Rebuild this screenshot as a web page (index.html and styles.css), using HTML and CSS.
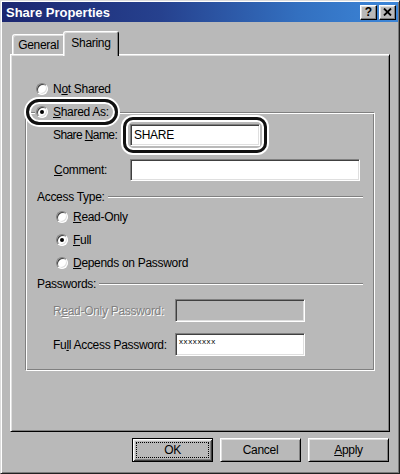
FILE: index.html
```html
<!DOCTYPE html>
<html>
<head>
<meta charset="utf-8">
<link rel="stylesheet" href="styles.css">
</head>
<body>
<div class="window">
  <div class="titlebar">
    <span class="title">Share Properties</span>
    <div class="tb-buttons">
      <span class="tb-btn help">?</span>
      <span class="tb-btn close"><svg width="9" height="8" viewBox="0 0 9 8"><path d="M1 0.5 L8 7.5 M8 0.5 L1 7.5" stroke="#000" stroke-width="1.8" fill="none"/></svg></span>
    </div>
  </div>
  <div class="body">
    <div class="tabs">
      <div class="tab">General</div>
      <div class="tab active">Sharing</div>
    </div>
    <div class="panel">
      <div class="radio-row top-radio"><span class="radio"></span><span>N<u>o</u>t Shared</span></div>
      <fieldset class="group">
        <legend><span class="legend-in"><span class="radio checked"></span><span><u>S</u>hared As:</span></span></legend>
        <div class="field-row name-row"><span class="lbl tight">Share <u>N</u>ame:</span><div class="input short">SHARE</div></div>
        <div class="field-row comment-row"><span class="lbl"><u>C</u>omment:</span><div class="input long"></div></div>
        <div class="section access"><span>Access Type:</span><span class="etch"></span></div>
        <div class="radio-row sub first"><span class="radio"></span><span><u>R</u>ead-Only</span></div>
        <div class="radio-row sub"><span class="radio checked"></span><span><u>F</u>ull</span></div>
        <div class="radio-row sub"><span class="radio"></span><span><u>D</u>epends on Password</span></div>
        <div class="section pw"><span>Passwords:</span><span class="etch"></span></div>
        <div class="field-row pw-row first disabled"><span class="lbl wide">R<u>e</u>ad-Only Password:</span><div class="input pwbox off"></div></div>
        <div class="field-row pw-row second"><span class="lbl wide">Fu<u>l</u>l Access Password:</span><div class="input pwbox"><span class="mask">xxxxxxxx</span></div></div>
      </fieldset>
    </div>
    <div class="buttons">
      <div class="btn default"><span class="focus">OK</span></div>
      <div class="btn">Cancel</div>
      <div class="btn"><span><u>A</u>pply</span></div>
    </div>
  </div>
  <div class="callout callout-shared"></div>
  <div class="callout callout-name"></div>
</div>
</body>
</html>
```
FILE: styles.css
```css
* { box-sizing: border-box; }
html, body { margin: 0; padding: 0; }
body {
  font-family: "Liberation Sans", Arial, sans-serif;
  font-size: 12px;
  letter-spacing: -0.3px;
  color: #000;
  background: #b9b9b9;
}
.window {
  position: relative;
  width: 400px;
  height: 474px;
  background: #b9b9b9;
  border: 1px solid;
  border-color: #dcdcdc #202020 #202020 #dcdcdc;
  box-shadow: inset 1px 1px #fff, inset -1px -1px #7a7a7a;
  padding: 1px;
  display: flex;
  flex-direction: column;
}
.titlebar {
  height: 20px;
  flex: none;
  display: flex;
  align-items: center;
  justify-content: space-between;
  padding: 0 2px 0 4px;
  background: linear-gradient(to right, #1b2670 0%, #26418e 40%, #3370c0 75%, #3c86d8 100%);
}
.title {
  color: #fff;
  font-weight: bold;
  font-size: 13px;
  letter-spacing: 0;
}
.tb-buttons { display: flex; gap: 2px; }
.tb-btn {
  width: 17px;
  height: 15px;
  background: #b9b9b9;
  border: 1px solid;
  border-color: #fff #000 #000 #fff;
  box-shadow: inset -1px -1px #808080, inset 1px 1px #dfdfdf;
  display: flex;
  align-items: center;
  justify-content: center;
  font-weight: bold;
  font-size: 12px;
  letter-spacing: 0;
  line-height: 1;
}
.body {
  flex: 1;
  padding: 9px 8px 0;
  display: flex;
  flex-direction: column;
}
.tabs {
  display: flex;
  align-items: flex-end;
  height: 23px;
  flex: none;
  position: relative;
  z-index: 1;
  padding-left: 2px;
}
.tab {
  width: 53px;
  height: 20px;
  background: #b9b9b9;
  border: 1px solid;
  border-bottom: none;
  border-color: #fff #000 transparent #fff;
  border-radius: 3px 3px 0 0;
  box-shadow: inset 1px 1px #dfdfdf, inset -1px 0 #808080;
  display: flex;
  align-items: center;
  justify-content: center;
  line-height: 16px;
}
.tab.active {
  width: 56px;
  height: 25px;
  margin-left: -2px;
  margin-bottom: -2px;
  align-items: flex-start;
  padding-top: 3px;
}
.panel {
  height: 378px;
  flex: none;
  border: 1px solid;
  border-color: #fff #000 #000 #fff;
  box-shadow: inset 1px 1px #dfdfdf, inset -1px -1px #808080;
  padding: 26px 14px 0 14px;
}
.radio-row {
  display: flex;
  align-items: center;
  height: 16px;
  gap: 5px;
  line-height: 16px;
}
.top-radio { margin-left: 11px; }
.radio {
  flex: none;
  position: relative;
  width: 12px;
  height: 12px;
  border-radius: 50%;
  background: #fff;
  border: 1px solid;
  border-color: #808080 #fff #fff #808080;
  box-shadow: inset 1px 1px #404040, inset -1px -1px #dfdfdf;
}
.radio.checked::after {
  content: "";
  position: absolute;
  left: 3px;
  top: 3px;
  width: 4px;
  height: 4px;
  border-radius: 50%;
  background: #000;
}
.group {
  margin: 7px 0 0;
  padding: 0 0 14px;
  min-width: 0;
  border: 1px solid;
  border-color: #808080 #fff #fff #808080;
  box-shadow: inset 1px 1px #fff, inset -1px -1px #808080;
}
.group legend {
  margin-left: 9px;
  padding: 0 4px 0 1px;
  height: 16px;
  background: #b9b9b9;
}
.legend-in {
  display: inline-flex;
  align-items: center;
  gap: 5px;
  height: 16px;
  line-height: 16px;
}
.field-row { display: flex; align-items: center; }
.lbl { width: 76px; flex: none; line-height: 16px; }
.lbl.tight { letter-spacing: -0.6px; }
.lbl.wide { width: 122px; }
.name-row { margin-top: 4px; padding-left: 27px; }
.comment-row { margin-top: 13px; padding-left: 28px; }
.name-row .lbl { width: 77px; }
.input {
  height: 22px;
  background: #fff;
  border: 1px solid;
  border-color: #808080 #fff #fff #808080;
  box-shadow: inset 1px 1px #404040, inset -1px -1px #dfdfdf;
  padding: 0 3px;
  display: flex;
  align-items: center;
}
.short { width: 130px; }
.long { width: 230px; }
.section {
  display: flex;
  align-items: center;
  height: 16px;
  line-height: 16px;
  gap: 3px;
  padding: 0 11px;
}
.access { margin-top: 8px; }
.pw { margin-top: 5px; }
.etch {
  flex: 1;
  height: 2px;
  border-top: 1px solid #808080;
  border-bottom: 1px solid #fff;
}
.sub { padding-left: 30px; margin-top: 7px; }
.sub.first { margin-top: 4px; }
.pw-row { padding-left: 27px; }
.pw-row.first { margin-top: 7px; }
.pw-row.second { margin-top: 11px; }
.pwbox {
  width: 130px;
  height: 23px;
  align-items: flex-start;
  padding-top: 4px;
}
.pwbox.off { background: #b9b9b9; }
.disabled .lbl {
  color: #808080;
  text-shadow: 1px 1px 0 #fff;
}
.mask {
  font-size: 8px;
  letter-spacing: 0.6px;
  line-height: 8px;
}
.buttons {
  display: flex;
  justify-content: flex-end;
  gap: 7px;
  margin-top: 6px;
  padding-right: 1px;
}
.btn {
  width: 81px;
  height: 24px;
  background: #b9b9b9;
  border: 1px solid;
  border-color: #fff #000 #000 #fff;
  box-shadow: inset 1px 1px #dfdfdf, inset -1px -1px #808080;
  display: flex;
  align-items: center;
  justify-content: center;
  line-height: 16px;
}
.btn.default {
  border-color: #000;
  box-shadow: inset 1px 1px #fff, inset -1px -1px #404040, inset 2px 2px #dfdfdf, inset -2px -2px #808080;
}
.focus {
  width: 73px;
  height: 16px;
  border: 1px dotted #000;
  display: flex;
  align-items: center;
  justify-content: center;
}
.callout {
  position: absolute;
  border: 3px solid #111;
  box-shadow: 0 0 0 2px #fff, inset 0 0 0 2px #fff;
  pointer-events: none;
}
.callout-shared {
  left: 25px;
  top: 98px;
  width: 92px;
  height: 26px;
  border-radius: 13px;
}
.callout-name {
  left: 122px;
  top: 116px;
  width: 144px;
  height: 36px;
  border-radius: 10px;
}
```
